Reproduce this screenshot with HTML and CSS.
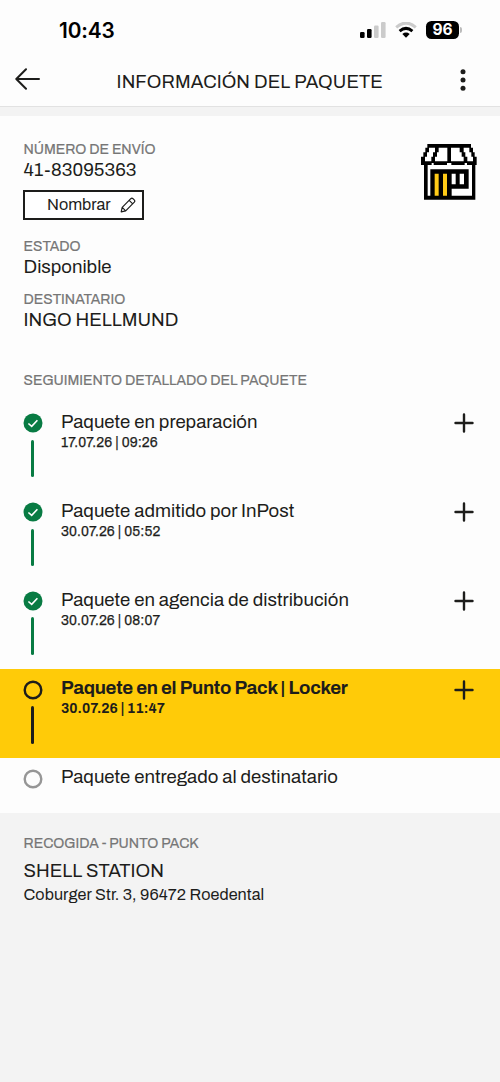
FILE: index.html
```html
<!DOCTYPE html>
<html lang="es">
<head>
<meta charset="utf-8">
<title>Información del paquete</title>
<link rel="stylesheet" href="styles.css">
</head>
<body>
<header class="top">
  <div class="status">
    <span class="clock">10:43</span>
    <div class="indicators">
      <svg class="signal" width="26" height="16" viewBox="0 0 26 16"><rect x="0" y="10" width="4.6" height="6" rx="1.2"/><rect x="7" y="7" width="4.6" height="9" rx="1.2"/><rect class="dim" x="14" y="3.6" width="4.6" height="12.4" rx="1.2"/><rect class="dim" x="21" y="0" width="4.6" height="16" rx="1.2"/></svg>
      <svg class="wifi" width="22" height="16" viewBox="0 0 22 16"><path class="dim-line" d="M1.2 5.3Q11-3.1 20.8 5.3"/><path class="line" d="M4.6 9.1Q11 3.7 17.4 9.1"/><path d="M7.3 11.9Q11 9.2 14.7 11.9L11 15.7Z"/></svg>
      <div class="battery"><span class="level">96</span><span class="cap"></span></div>
    </div>
  </div>
  <div class="nav">
    <svg class="back" width="26" height="22" viewBox="0 0 26 22"><path d="M24 11H1.5M11 1.2L1.3 11L11 20.8"/></svg>
    <h1 class="title">INFORMACIÓN DEL PAQUETE</h1>
    <svg class="menu" width="6" height="22" viewBox="0 0 6 22"><circle cx="3" cy="2.8" r="2.5"/><circle cx="3" cy="11" r="2.5"/><circle cx="3" cy="19.2" r="2.5"/></svg>
  </div>
</header>
<main>
  <section class="summary">
    <div class="details">
      <div class="label number-label">NÚMERO DE ENVÍO</div>
      <div class="value number">41-83095363</div>
      <button class="rename"><span>Nombrar</span>
        <svg width="16" height="16" viewBox="0 0 16 16"><path d="M1.2 14.8L2.2 10.3L10.8 1.7Q11.9.7 13 1.7L14.4 3.1Q15.3 4.1 14.3 5.2L5.7 13.8ZM9.2 3.3L12.7 6.8M2.2 10.3L5.7 13.8"/></svg>
      </button>
      <div class="label">ESTADO</div>
      <div class="value">Disponible</div>
      <div class="label recipient-label">DESTINATARIO</div>
      <div class="value recipient">INGO HELLMUND</div>
    </div>
    <svg class="store" width="56" height="56" viewBox="34 27 168 168">
      <path d="M53 27H184V38H190V52H195V65H201V90H197V194H43V90H34V65H41V52H47V38H53Z"/>
      <path class="paper" d="M58 38H76V52H70V65H65V79H46V65H52V52H58ZM87 38H113V79H76V65H82V52H87ZM124 38H150V52H156V65H162V79H124ZM162 38H179V52H185V65H190V79H173V65H167V52H162Z"/>
      <path class="paper" d="M54 90H66V84H72V90H112V84H125V90H165V84H172V90H187V182H126V161H177V103H62V182H54Z"/>
      <path class="paper" d="M126 116H138V148H126ZM150 116H163V148H150Z"/>
      <path class="gold" d="M75 116H87V182H75ZM100 116H112V182H100Z"/>
    </svg>
  </section>
  <section class="tracking">
    <h2 class="label tracking-label">SEGUIMIENTO DETALLADO DEL PAQUETE</h2>
    <div class="step done">
      <div class="rail"><svg class="dot" width="20" height="20" viewBox="0 0 20 20"><circle cx="10" cy="10" r="9.5"/><path d="M5.4 10.5L8.7 13.4L14.4 7.2"/></svg><span class="bar"></span></div>
      <div class="text"><div class="name">Paquete en preparación</div><div class="time">17.07.26 | 09:26</div></div>
      <svg class="plus" width="20" height="20" viewBox="0 0 20 20"><path d="M10 1.5V18.5M1.5 10H18.5"/></svg>
    </div>
    <div class="step done">
      <div class="rail"><svg class="dot" width="20" height="20" viewBox="0 0 20 20"><circle cx="10" cy="10" r="9.5"/><path d="M5.4 10.5L8.7 13.4L14.4 7.2"/></svg><span class="bar"></span></div>
      <div class="text"><div class="name">Paquete admitido por InPost</div><div class="time">30.07.26 | 05:52</div></div>
      <svg class="plus" width="20" height="20" viewBox="0 0 20 20"><path d="M10 1.5V18.5M1.5 10H18.5"/></svg>
    </div>
    <div class="step done">
      <div class="rail"><svg class="dot" width="20" height="20" viewBox="0 0 20 20"><circle cx="10" cy="10" r="9.5"/><path d="M5.4 10.5L8.7 13.4L14.4 7.2"/></svg><span class="bar"></span></div>
      <div class="text"><div class="name">Paquete en agencia de distribución</div><div class="time">30.07.26 | 08:07</div></div>
      <svg class="plus" width="20" height="20" viewBox="0 0 20 20"><path d="M10 1.5V18.5M1.5 10H18.5"/></svg>
    </div>
    <div class="step current">
      <div class="rail"><svg class="dot" width="20" height="20" viewBox="0 0 20 20"><circle cx="10" cy="10" r="8.3"/></svg><span class="bar"></span></div>
      <div class="text"><div class="name">Paquete en el Punto Pack | Locker</div><div class="time">30.07.26 | 11:47</div></div>
      <svg class="plus" width="20" height="20" viewBox="0 0 20 20"><path d="M10 1.5V18.5M1.5 10H18.5"/></svg>
    </div>
    <div class="step pending">
      <div class="rail"><svg class="dot" width="20" height="20" viewBox="0 0 20 20"><circle cx="10" cy="10" r="8.3"/></svg></div>
      <div class="text"><div class="name">Paquete entregado al destinatario</div></div>
    </div>
  </section>
  <section class="pickup">
    <div class="label pickup-label">RECOGIDA - PUNTO PACK</div>
    <div class="value shop">SHELL STATION</div>
    <div class="address">Coburger Str. 3, 96472 Roedental</div>
  </section>
</main>
</body>
</html>
```
FILE: styles.css
```css
* { box-sizing: border-box; }
body {
  margin: 0;
  min-height: 1082px;
  display: flex;
  flex-direction: column;
  background: #fdfdfd;
  color: #1d1d1b;
  font-family: Archivo, "Liberation Sans", Arial, sans-serif;
}
svg { display: block; flex: none; }
.top { height: 116px; border-bottom: 9px solid #f3f3f3; box-shadow: inset 0 -1px #e2e2e2; }
.status { height: 58px; display: flex; justify-content: space-between; padding: 18px 38px 0 59px; }
.clock { font: 600 20.8px/25px Inter, sans-serif; color: #000; letter-spacing: -.1px; }
.indicators { display: flex; align-items: flex-start; padding-top: 3.5px; }
.wifi { margin-left: 8.5px; }
.signal { margin-left: -1px; }
.signal .dim { fill: #cbcbcb; }
.wifi path { fill: #000; }
.wifi .line, .wifi .dim-line { fill: none; stroke: #000; stroke-width: 3; }
.wifi .dim-line { stroke: #cbcbcb; }
.battery { display: flex; align-items: center; gap: 1px; margin-left: 9.5px; margin-top: -1px; }
.level { width: 33px; height: 18px; border-radius: 5.5px; background: #000; color: #fff; text-align: center; font: 700 15.5px/18px Inter, sans-serif; }
.cap { width: 2px; height: 6px; border-radius: 0 2px 2px 0; background: #bbb; }
.nav { height: 48px; display: flex; align-items: flex-start; justify-content: space-between; padding: 10px 34.5px 0 15px; }
.back { fill: none; stroke: #1d1d1b; stroke-width: 2; stroke-linecap: round; stroke-linejoin: round; }
.menu { margin-top: 1px; fill: #1d1d1b; }
.title { margin: 3px 1px 0 0; font-size: 18.5px; line-height: 22px; font-weight: 400; letter-spacing: .08px; white-space: nowrap; }
.summary { height: 253px; padding: 25px 23px 0 23.5px; display: flex; justify-content: space-between; }
.store { margin-top: 3px; }
.store .paper { fill: #fff; }
.store .gold { fill: #ffcb17; }
.label { margin: 0; color: #767676; font-size: 14px; line-height: 18px; font-weight: 400; letter-spacing: -.01px; white-space: nowrap; -webkit-text-stroke: .2px #767676; }
.value { font-size: 18.6px; line-height: 22px; white-space: nowrap; }
.number { letter-spacing: .03px; }
.rename {
  width: 121px; height: 30px; margin: 9px 0 18px -.5px; padding: 0 6px 0 22px;
  display: flex; align-items: center; justify-content: space-between;
  border: 2px solid #1d1d1b; background: #fff; color: #1d1d1b;
  font: 16.2px/22px Archivo, "Liberation Sans", Arial, sans-serif;
}
.rename svg { fill: none; stroke: #1d1d1b; stroke-width: 1.2; stroke-linejoin: round; }
.recipient-label { margin-top: 13px; }
.tracking-label { height: 33.4px; padding: 3px 23.5px 0; }
.step { height: 88.8px; display: flex; padding: 11px 26px 0 22.6px; }
.rail { width: 20px; display: flex; flex-direction: column; align-items: center; gap: 6.5px; }
.bar { width: 2.6px; height: 37.5px; border-radius: 2px; background: #087b43; }
.dot { fill: none; stroke-width: 2.4; }
.done .dot circle { fill: #087b43; }
.done .dot path { stroke: #fff; stroke-width: 1.6; }
.current { background: #ffcb08; }
.current .dot { stroke: #1d1d1b; }
.current .bar { background: #1d1d1b; }
.pending { height: 55.8px; }
.pending .dot { stroke: #969696; }
.text { flex: 1; padding-left: 18.4px; margin-top: -2.4px; }
.name { font-size: 18.6px; line-height: 22px; letter-spacing: .02px; white-space: nowrap; }
.time { font-size: 13.8px; line-height: 19px; letter-spacing: .1px; -webkit-text-stroke: .25px #1d1d1b; }
.current .name { font-weight: 700; letter-spacing: -.28px; }
.current .time { font-weight: 700; -webkit-text-stroke: 0; }
.plus { fill: none; stroke: #1d1d1b; stroke-width: 2.4; stroke-linecap: round; }
main { flex: 1; display: flex; flex-direction: column; }
.pickup { flex: 1; padding: 22px 23.5px; background: #f3f3f3; }
.shop { margin-top: 7px; }
.address { margin-top: 3px; font-size: 16.2px; line-height: 20px; letter-spacing: .07px; }
```
